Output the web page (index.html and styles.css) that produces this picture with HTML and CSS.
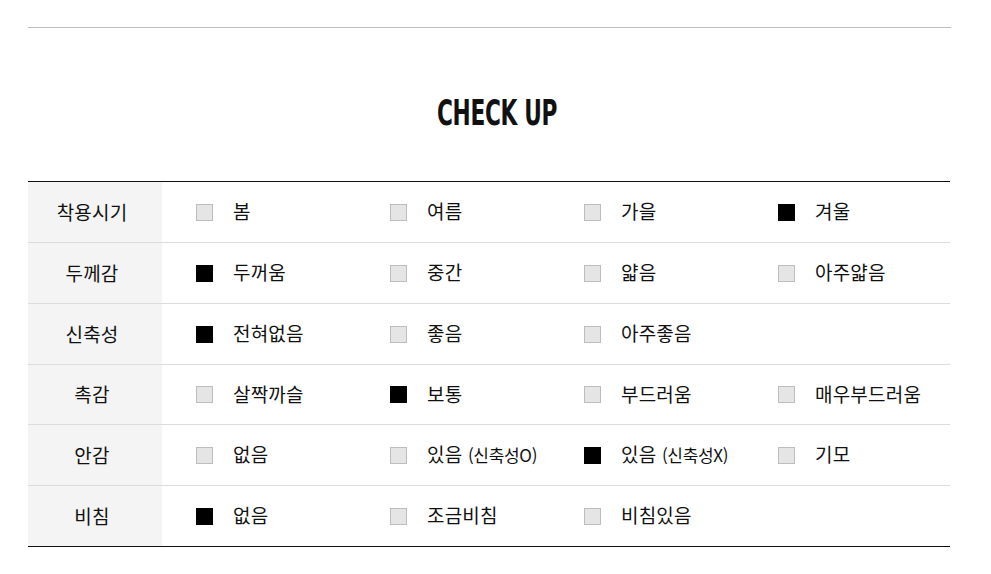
FILE: index.html
```html
<!DOCTYPE html>
<html lang="ko">
<head>
<meta charset="utf-8">
<link rel="stylesheet" href="styles.css">
</head>
<body>
<div class="wrap">
  <div class="topline"></div>
  <h2 class="title">CHECK UP</h2>
  <div class="table">
    <div class="row">
      <div class="label">착용시기</div>
      <div class="opts">
        <div class="opt"><span class="box"></span><span class="txt">봄</span></div>
        <div class="opt"><span class="box"></span><span class="txt">여름</span></div>
        <div class="opt"><span class="box"></span><span class="txt">가을</span></div>
        <div class="opt"><span class="box on"></span><span class="txt">겨울</span></div>
      </div>
    </div>
    <div class="row">
      <div class="label">두께감</div>
      <div class="opts">
        <div class="opt"><span class="box on"></span><span class="txt">두꺼움</span></div>
        <div class="opt"><span class="box"></span><span class="txt">중간</span></div>
        <div class="opt"><span class="box"></span><span class="txt">얇음</span></div>
        <div class="opt"><span class="box"></span><span class="txt">아주얇음</span></div>
      </div>
    </div>
    <div class="row">
      <div class="label">신축성</div>
      <div class="opts">
        <div class="opt"><span class="box on"></span><span class="txt">전혀없음</span></div>
        <div class="opt"><span class="box"></span><span class="txt">좋음</span></div>
        <div class="opt"><span class="box"></span><span class="txt">아주좋음</span></div>
      </div>
    </div>
    <div class="row">
      <div class="label">촉감</div>
      <div class="opts">
        <div class="opt"><span class="box"></span><span class="txt">살짝까슬</span></div>
        <div class="opt"><span class="box on"></span><span class="txt">보통</span></div>
        <div class="opt"><span class="box"></span><span class="txt">부드러움</span></div>
        <div class="opt"><span class="box"></span><span class="txt">매우부드러움</span></div>
      </div>
    </div>
    <div class="row">
      <div class="label">안감</div>
      <div class="opts">
        <div class="opt"><span class="box"></span><span class="txt">없음</span></div>
        <div class="opt"><span class="box"></span><span class="txt">있음 <span class="small">(신축성O)</span></span></div>
        <div class="opt"><span class="box on"></span><span class="txt">있음 <span class="small">(신축성X)</span></span></div>
        <div class="opt"><span class="box"></span><span class="txt">기모</span></div>
      </div>
    </div>
    <div class="row">
      <div class="label">비침</div>
      <div class="opts">
        <div class="opt"><span class="box on"></span><span class="txt">없음</span></div>
        <div class="opt"><span class="box"></span><span class="txt">조금비침</span></div>
        <div class="opt"><span class="box"></span><span class="txt">비침있음</span></div>
      </div>
    </div>
  </div>
</div>
</body>
</html>
```
FILE: styles.css
```css
html, body {
  margin: 0;
  padding: 0;
  background: #fff;
}
body {
  font-family: "Noto Sans CJK KR", "Noto Sans", sans-serif;
  color: #111;
}
.wrap {
  padding: 27px 41px 0 28px;
}
.topline {
  height: 1px;
  background: #bdbdbd;
  margin-right: -1px;
}
.title {
  margin: 67px 0 50px;
  padding-left: 16px;
  text-align: center;
  font-family: "Liberation Sans Narrow", "DejaVu Sans", sans-serif;
  font-stretch: condensed;
  font-weight: 700;
  font-size: 36px;
  line-height: 36px;
  letter-spacing: -0.5px;
  color: #111;
  transform: scaleX(0.67);
  transform-origin: calc(50% + 8px) 0;
}
.table {
  border-top: 1px solid #111;
  border-bottom: 1px solid #111;
}
.row {
  display: flex;
  height: 60px;
  border-top: 1px solid #dcdcdc;
}
.row:first-child {
  border-top: none;
}
.row:nth-child(4) {
  height: 59px;
}
.label {
  width: 134px;
  flex: none;
  background: #f4f4f4;
  display: flex;
  align-items: center;
  justify-content: center;
  padding-right: 6px;
  padding-bottom: 2px;
  box-sizing: border-box;
  font-size: 19px;
  letter-spacing: 0.2px;
}
.opts {
  display: flex;
  align-items: center;
  padding-left: 34px;
}
.opt {
  width: 194px;
  display: flex;
  align-items: center;
}
.box {
  width: 17px;
  height: 17px;
  box-sizing: border-box;
  background: #e5e5e5;
  border: 1px solid #bdbdbd;
  flex: none;
  margin-right: 20px;
}
.box.on {
  background: #000;
  border-color: #000;
}
.txt {
  font-size: 19px;
  letter-spacing: 0.2px;
  line-height: 20px;
  white-space: nowrap;
  position: relative;
  top: -1px;
}
.small {
  font-size: 17px;
  letter-spacing: -0.3px;
}
```
